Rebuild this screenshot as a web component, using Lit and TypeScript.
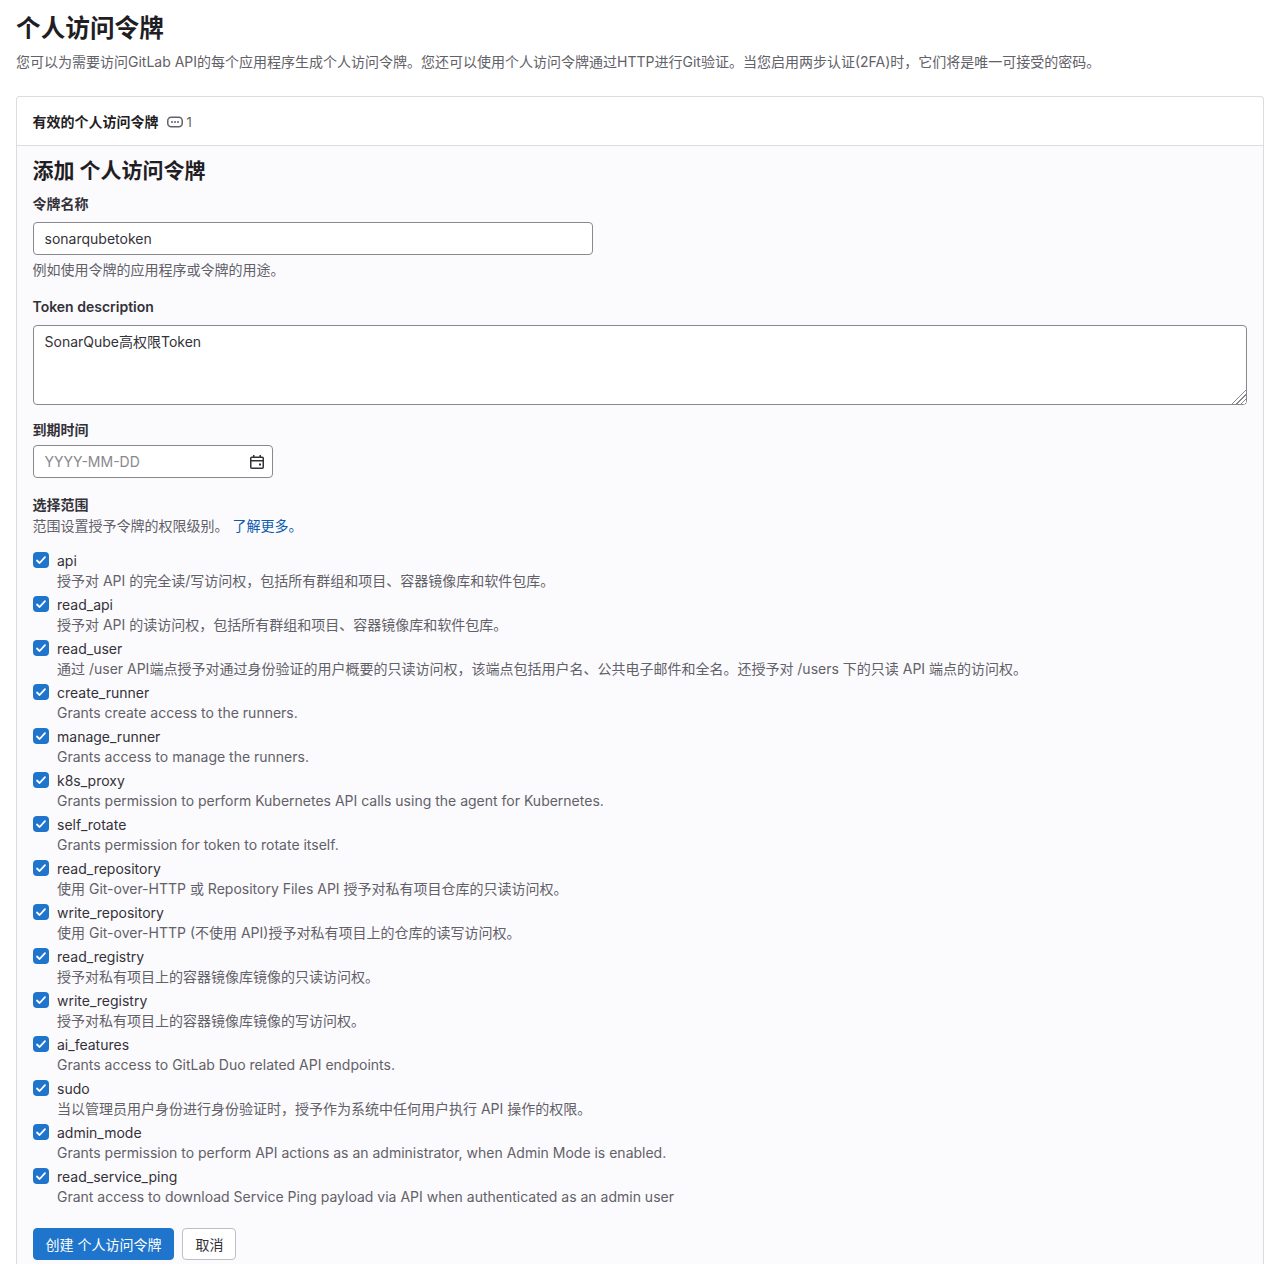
import { LitElement, html, css } from "lit";
import { customElement } from "lit/decorators.js";

const scopes: [string, string][] = [
  ["api", "授予对 API 的完全读/写访问权，包括所有群组和项目、容器镜像库和软件包库。"],
  ["read_api", "授予对 API 的读访问权，包括所有群组和项目、容器镜像库和软件包库。"],
  ["read_user", "通过 /user API端点授予对通过身份验证的用户概要的只读访问权，该端点包括用户名、公共电子邮件和全名。还授予对 /users 下的只读 API 端点的访问权。"],
  ["create_runner", "Grants create access to the runners."],
  ["manage_runner", "Grants access to manage the runners."],
  ["k8s_proxy", "Grants permission to perform Kubernetes API calls using the agent for Kubernetes."],
  ["self_rotate", "Grants permission for token to rotate itself."],
  ["read_repository", "使用 Git-over-HTTP 或 Repository Files API 授予对私有项目仓库的只读访问权。"],
  ["write_repository", "使用 Git-over-HTTP (不使用 API)授予对私有项目上的仓库的读写访问权。"],
  ["read_registry", "授予对私有项目上的容器镜像库镜像的只读访问权。"],
  ["write_registry", "授予对私有项目上的容器镜像库镜像的写访问权。"],
  ["ai_features", "Grants access to GitLab Duo related API endpoints."],
  ["sudo", "当以管理员用户身份进行身份验证时，授予作为系统中任何用户执行 API 操作的权限。"],
  ["admin_mode", "Grants permission to perform API actions as an administrator, when Admin Mode is enabled."],
  ["read_service_ping", "Grant access to download Service Ping payload via API when authenticated as an admin user"],
];

@customElement("app-root")
export class AppRoot extends LitElement {
  static styles = css`
    :host {
      display: block;
      height: 1264px;
      overflow: hidden;
      background: #fff;
      color: #333238;
      font-family: Inter, "Noto Sans CJK SC", sans-serif;
      font-size: 14px;
      line-height: 20px;
    }
    * { box-sizing: border-box; }
    .page { padding: 0 16px; }
    h1 {
      margin: 0;
      padding-top: 12px;
      font-size: 24.64px;
      line-height: 32px;
      font-weight: 700;
      color: #1f1e24;
    }
    .intro { margin: 8px 0 0; color: #626168; height: 20px; white-space: nowrap; }
    .card {
      margin-top: 24px;
      border: 1px solid #dcdcde;
      border-radius: 4px 4px 0 0;
      border-bottom: 0;
      background: #fbfafd;
    }
    .card-head {
      height: 49px;
      background: #fff;
      border-bottom: 1px solid #dcdcde;
      border-radius: 4px 4px 0 0;
      display: flex;
      align-items: center;
      padding: 1px 16px 0 15.5px;
    }
    .card-head strong { font-weight: 600; color: #1f1e24; }
    .count { display: flex; align-items: center; gap: 4px; margin-left: 8px; color: #626168; font-size: 13px; }
    .count svg { display: block; }
    .body { padding: 8px 16px 0 15.5px; }
    h2 {
      margin: 0;
      font-size: 21px;
      line-height: 34px;
      font-weight: 700;
      color: #1f1e24;
    }
    .lbl {
      display: block;
      font-weight: 600;
      line-height: 20px;
      color: #333238;
    }
    .l-name { margin-top: 6px; }
    input.text {
      display: block;
      width: 560.5px;
      height: 33px;
      margin-top: 8px;
      padding: 0 11px;
      border: 1px solid #89888d;
      border-radius: 4px;
      background: #fff;
      font: inherit;
      color: #333238;
      outline: none;
    }
    .help { color: #626168; height: 20px; margin-top: 5px; white-space: nowrap; }
    .l-desc { margin-top: 17px; }
    textarea {
      display: block;
      width: 1214.5px;
      height: 80px;
      margin-top: 8px;
      padding: 6px 11px;
      border: 1px solid #89888d;
      border-radius: 4px;
      background: #fff;
      font: inherit;
      color: #333238;
      outline: none;
      resize: vertical;
    }
    textarea::-webkit-resizer {
      background:
        linear-gradient(135deg, #fff 50%, transparent 50%),
        repeating-linear-gradient(135deg, #fff 0 2px, #89888d 2px 3px);
    }
    .l-date { margin-top: 15px; }
    .date {
      display: flex;
      align-items: center;
      justify-content: space-between;
      width: 240.5px;
      height: 33px;
      margin-top: 5px;
      padding: 0 7px 0 11px;
      border: 1px solid #89888d;
      border-radius: 4px;
      background: #fff;
      color: #89888d;
    }
    .date svg { display: block; }
    .l-scope { margin-top: 17px; }
    .scope-help { color: #626168; margin-top: 1px; height: 20px; }
    .scope-help a { color: #0b5cad; text-decoration: none; }
    .scopes { display: flex; flex-direction: column; gap: 4px; margin-top: 15px; }
    .row { display: flex; gap: 8px; height: 40px; }
    .check {
      flex: none;
      width: 16px;
      height: 16px;
      margin-top: 1px;
      margin-left: 0.5px;
      border-radius: 4px;
      background: #1f75cb;
      display: flex;
      align-items: center;
      justify-content: center;
    }
    .name { color: #333238; height: 20px; }
    .desc { color: #626168; height: 20px; white-space: nowrap; }
    .actions { display: flex; gap: 8px; margin-top: 21px; padding-bottom: 8px; }
    button {
      height: 32px;
      border-radius: 4px;
      font: inherit;
      padding: 1px 12px 0;
    }
    .primary { background: #1f75cb; color: #fff; border: 1px solid #1f75cb; }
    .cancel { background: #fff; color: #333238; border: 1px solid #bfbfc3; }
  `;

  render() {
    return html`
      <div class="page">
        <h1>个人访问令牌</h1>
        <p class="intro">您可以为需要访问GitLab API的每个应用程序生成个人访问令牌。您还可以使用个人访问令牌通过HTTP进行Git验证。当您启用两步认证(2FA)时，它们将是唯一可接受的密码。</p>
        <section class="card">
          <header class="card-head">
            <strong>有效的个人访问令牌</strong>
            <span class="count">
              <svg width="16" height="16" viewBox="0 0 16 16" fill="none">
                <rect x="0.75" y="3.25" width="14.5" height="9.5" rx="3.5" stroke="#626168" stroke-width="1.5"/>
                <circle cx="5" cy="8" r="1" fill="#626168"/><circle cx="8" cy="8" r="1" fill="#626168"/><circle cx="11" cy="8" r="1" fill="#626168"/>
              </svg>
              1
            </span>
          </header>
          <div class="body">
            <h2>添加 个人访问令牌</h2>
            <label class="lbl l-name">令牌名称</label>
            <input class="text" .value=${"sonarqubetoken"} />
            <div class="help">例如使用令牌的应用程序或令牌的用途。</div>
            <label class="lbl l-desc">Token description</label>
            <textarea .value=${"SonarQube高权限Token"}></textarea>
            <label class="lbl l-date">到期时间</label>
            <div class="date">
              <span>YYYY-MM-DD</span>
              <svg width="16" height="16" viewBox="0 0 16 16" fill="none" stroke="#333238" stroke-width="1.5">
                <rect x="1.75" y="3.25" width="12.5" height="11" rx="1"/>
                <path d="M1.75 6.75h12.5M4.75 1v3M11.25 1v3"/>
                <rect x="10" y="9.5" width="2" height="2" fill="#333238" stroke="none"/>
              </svg>
            </div>
            <div class="lbl l-scope">选择范围</div>
            <div class="scope-help">范围设置授予令牌的权限级别。 <a href="#">了解更多。</a></div>
            <div class="scopes">
              ${scopes.map(
                ([n, d]) => html`
                  <div class="row">
                    <span class="check">
                      <svg width="12" height="12" viewBox="0 0 12 12" fill="none" stroke="#fff" stroke-width="1.8" stroke-linecap="round" stroke-linejoin="round">
                        <path d="M2 6.5l2.6 2.5L10 3.2"/>
                      </svg>
                    </span>
                    <div><div class="name">${n}</div><div class="desc">${d}</div></div>
                  </div>
                `
              )}
            </div>
            <div class="actions">
              <button class="primary">创建 个人访问令牌</button>
              <button class="cancel">取消</button>
            </div>
          </div>
        </section>
      </div>
    `;
  }
}
